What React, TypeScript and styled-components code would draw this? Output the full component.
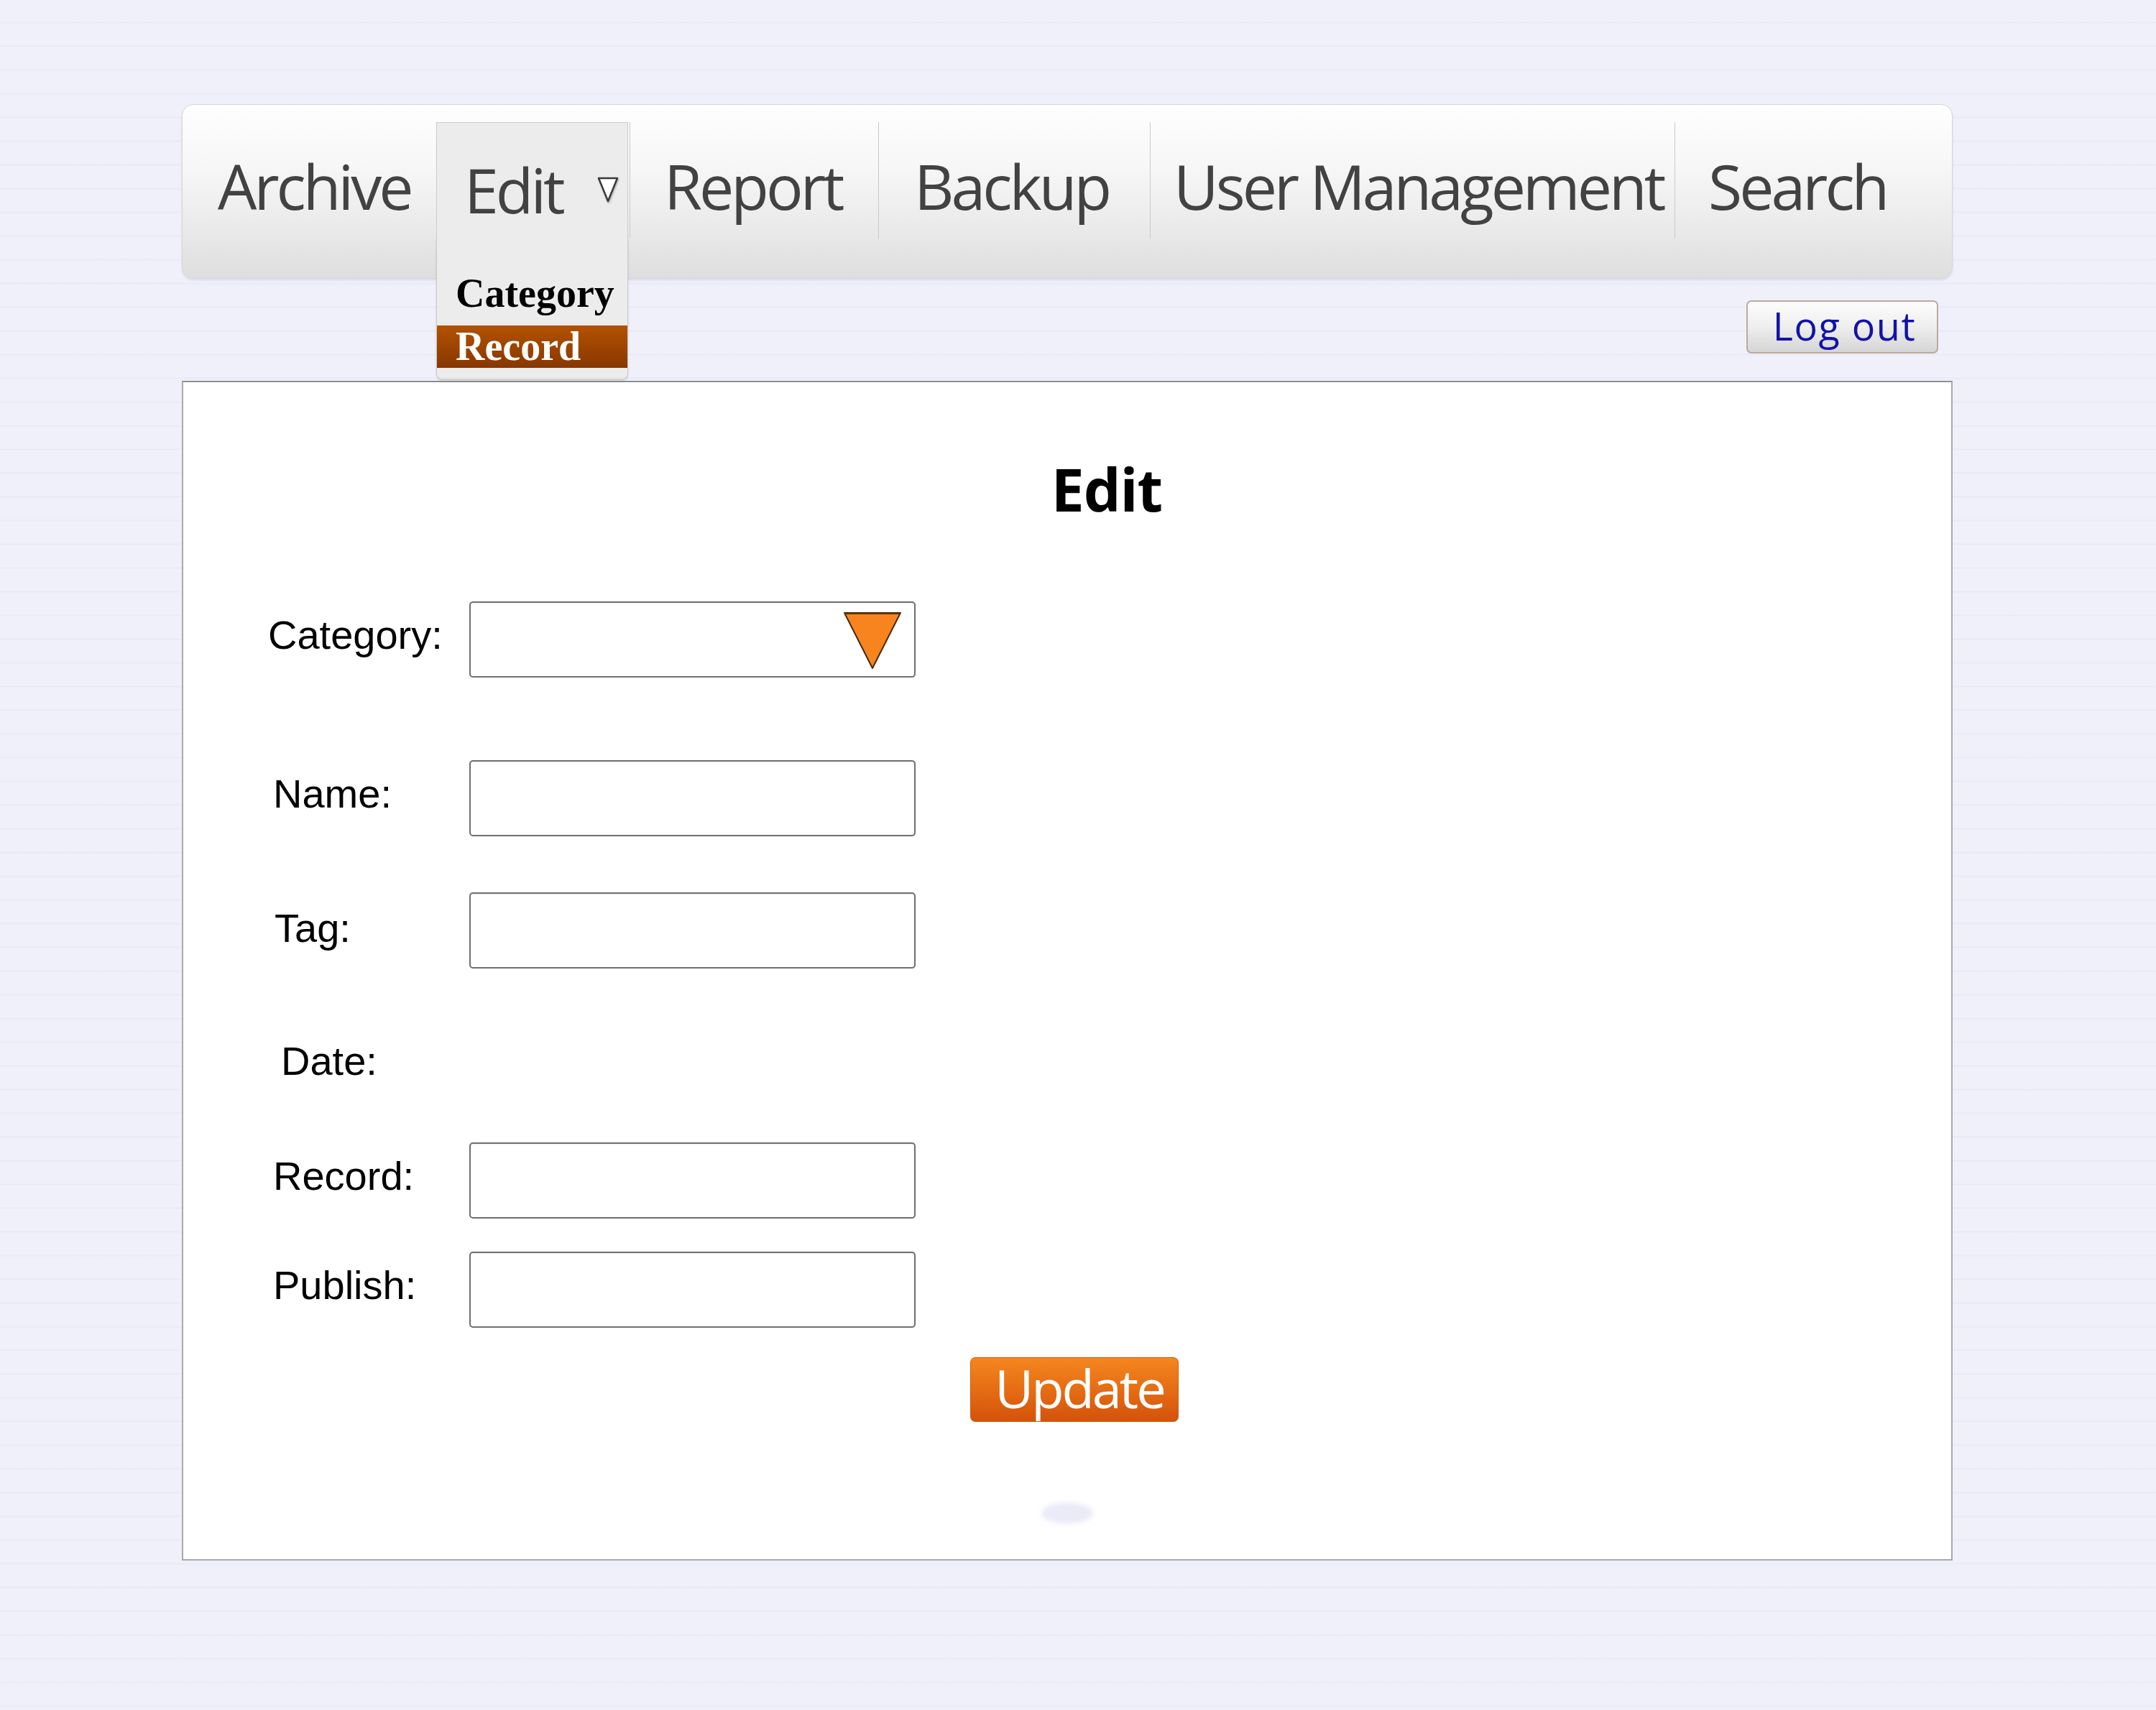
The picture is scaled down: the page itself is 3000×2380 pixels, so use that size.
import React from "react";
import styled, { createGlobalStyle } from "styled-components";

const GlobalStyle = createGlobalStyle`
  html, body { margin: 0; padding: 0; }
  body {
    background-color: #f0f0fb;
    background-image: repeating-linear-gradient(
      to bottom,
      rgba(255, 255, 255, 0) 0px,
      rgba(255, 255, 255, 0) 30px,
      rgba(218, 218, 238, 0.28) 31px,
      rgba(218, 218, 238, 0.28) 32px,
      rgba(255, 255, 255, 0) 33px
    );
    font-family: "Open Sans", "Liberation Sans", sans-serif;
  }
`;

const Page = styled.div`
  min-height: 2380px;
  box-sizing: border-box;
  padding: 145px 0 0 253px;
`;

const Frame = styled.div`
  width: 2464px;
`;

const NavBar = styled.nav`
  display: flex;
  height: 243px;
  box-sizing: border-box;
  padding: 24px 0 55px;
  border: 1px solid #d6d6d6;
  border-radius: 16px;
  background: linear-gradient(
    to bottom,
    #fefefe 0%,
    #f7f7f7 35%,
    #ebebeb 68%,
    #dedede 100%
  );
  box-shadow: 0 2px 3px rgba(120, 120, 150, 0.18);
`;

const NavItem = styled.div<{ $w?: number; $pl: number; $sep?: boolean; $open?: boolean }>`
  position: relative;
  box-sizing: border-box;
  ${(p) => (p.$w ? `width: ${p.$w}px; flex: none;` : `flex: 1;`)}
  height: 162px;
  display: flex;
  align-items: center;
  padding: ${(p) => (p.$open ? 24 : 14)}px 0 0 ${(p) => p.$pl}px;
  border-left: ${(p) => (p.$sep ? "1px solid #cacaca" : "none")};
  ${(p) =>
    p.$open
      ? `
    background: #ececec;
    border: 1px solid #cbcbcb;
    border-bottom: none;
    margin: 0 2px;
  `
      : ""}
  font-family: "Open Sans", "Liberation Sans", sans-serif;
  font-size: 86px;
  letter-spacing: -4px;
  color: #424242;
  white-space: nowrap;
`;

const NavArrow = styled.svg`
  margin-left: 48px;
  filter: drop-shadow(1px 2px 1px rgba(0, 0, 0, 0.25));
`;

const Dropdown = styled.div`
  position: absolute;
  top: 100%;
  left: -1px;
  right: -1px;
  box-sizing: border-box;
  padding: 47px 0 15px;
  background: #ececec;
  border: 1px solid #cbcbcb;
  border-top: none;
  border-radius: 0 0 8px 8px;
  box-shadow: 0 2px 3px rgba(0, 0, 0, 0.12);
  z-index: 5;
  letter-spacing: 0;
`;

const DropItem = styled.div<{ $active?: boolean }>`
  height: 59px;
  line-height: 59px;
  padding-left: 26px;
  font-family: "Liberation Serif", "Times New Roman", serif;
  font-weight: 700;
  font-size: 56px;
  color: ${(p) => (p.$active ? "#ffffff" : "#000000")};
  background: ${(p) =>
    p.$active ? "linear-gradient(to bottom, #b35200, #873700)" : "transparent"};
  & + & {
    margin-top: 15px;
  }
`;

const TopRow = styled.div`
  display: flex;
  justify-content: flex-end;
  padding: 30px 20px 38px 0;
`;

const LogoutButton = styled.button`
  width: 267px;
  height: 74px;
  box-sizing: border-box;
  border: 2px solid #bcaa9c;
  border-radius: 7px;
  background: linear-gradient(to bottom, #fdfdfd 0%, #eeeeee 50%, #d5d5d5 100%);
  display: flex;
  align-items: center;
  justify-content: center;
  padding: 0 0 4px 6px;
  font-family: "Open Sans", "Liberation Sans", sans-serif;
  font-size: 54px;
  letter-spacing: 1.5px;
  line-height: 1;
  color: #1212a8;
`;

const Panel = styled.main`
  box-sizing: border-box;
  height: 1642px;
  background: #ffffff;
  border: 2px solid #a9a9a9;
  border-top-color: #8e8e8e;
  padding-top: 92px;
`;

const Title = styled.h1`
  margin: 0;
  padding-left: 110px;
  text-align: center;
  font-family: "Open Sans", "Liberation Sans", sans-serif;
  font-weight: 700;
  font-size: 82px;
  letter-spacing: -1px;
  line-height: normal;
  color: #000;
`;

const Form = styled.form`
  margin: 101px 0 0;
`;

const Row = styled.div<{ $mt: number }>`
  display: grid;
  grid-template-columns: 398px 621px;
  height: 106px;
  margin-top: ${(p) => p.$mt}px;
`;

const Label = styled.label<{ $indent: number; $drop?: number }>`
  display: flex;
  align-items: center;
  padding: ${(p) => p.$drop ?? 0}px 0 14px ${(p) => p.$indent}px;
  font-family: "Liberation Sans", Arial, sans-serif;
  font-size: 56px;
  color: #000;
`;

const TextInput = styled.input`
  box-sizing: border-box;
  width: 100%;
  height: 106px;
  margin: 0;
  border: 2px solid #6f6f6f;
  border-radius: 5px;
  background: #fff;
  box-shadow: inset 0 1px 2px rgba(0, 0, 0, 0.08);
  outline: none;
`;

const SelectBox = styled.div`
  box-sizing: border-box;
  height: 106px;
  display: flex;
  justify-content: flex-end;
  align-items: flex-start;
  padding: 12px 17px 0 0;
  border: 2px solid #6f6f6f;
  border-radius: 5px;
  background: #fff;
  box-shadow: inset 0 1px 2px rgba(0, 0, 0, 0.08);
`;

const Actions = styled.div`
  display: flex;
  justify-content: center;
  padding-left: 20px;
  margin-top: 41px;
`;

const UpdateButton = styled.button`
  width: 290px;
  height: 90px;
  box-sizing: border-box;
  border: 1px solid #c9600f;
  border-radius: 7px;
  background: linear-gradient(to bottom, #f4861f 0%, #e56d14 50%, #d4520b 100%);
  padding: 0 0 4px 14px;
  display: flex;
  align-items: center;
  justify-content: center;
  font-family: "Open Sans", "Liberation Sans", sans-serif;
  font-size: 74px;
  letter-spacing: -3px;
  line-height: 1;
  color: #ffffff;
`;

const Glow = styled.div`
  width: 72px;
  height: 30px;
  margin: 112px auto 0;
  border-radius: 50%;
  background: #ebebf8;
  filter: blur(3px);
`;

type NavDef = { label: string; w?: number; pl: number; sep?: boolean; open?: boolean };

const navItems: NavDef[] = [
  { label: "Archive", w: 351, pl: 49 },
  { label: "Edit", w: 267, pl: 38, sep: true, open: true },
  { label: "Report", w: 346, pl: 47, sep: true },
  { label: "Backup", w: 378, pl: 49, sep: true },
  { label: "User Management", w: 730, pl: 32, sep: true },
  { label: "Search", pl: 46, sep: true },
];

const EditArrow = () => (
  <NavArrow width="30" height="36" viewBox="0 0 30 36">
    <polygon
      points="2,2 28,2 15,34"
      fill="#ffffff"
      stroke="#3a3a3a"
      strokeWidth="2.5"
      strokeLinejoin="round"
    />
  </NavArrow>
);

const OrangeTriangle = () => (
  <svg width="82" height="81" viewBox="0 0 82 81">
    <polygon
      points="2,2 80,2 41,79"
      fill="#f7841e"
      stroke="#4a2a08"
      strokeWidth="2"
      strokeLinejoin="round"
    />
    <line x1="2" y1="2.5" x2="80" y2="2.5" stroke="#5a3000" strokeWidth="3" />
  </svg>
);

export default function App() {
  return (
    <>
      <GlobalStyle />
      <Page>
        <Frame>
          <NavBar>
            {navItems.map((it) => (
              <NavItem key={it.label} $w={it.w} $pl={it.pl} $sep={it.sep} $open={it.open}>
                {it.label}
                {it.open && (
                  <>
                    <EditArrow />
                    <Dropdown>
                      <DropItem>Category</DropItem>
                      <DropItem $active>Record</DropItem>
                    </Dropdown>
                  </>
                )}
              </NavItem>
            ))}
          </NavBar>

          <TopRow>
            <LogoutButton type="button">Log out</LogoutButton>
          </TopRow>

          <Panel>
            <Title>Edit</Title>
            <Form onSubmit={(e) => e.preventDefault()}>
              <Row $mt={0}>
                <Label $indent={118}>Category:</Label>
                <SelectBox>
                  <OrangeTriangle />
                </SelectBox>
              </Row>
              <Row $mt={115}>
                <Label $indent={125}>Name:</Label>
                <TextInput type="text" />
              </Row>
              <Row $mt={78}>
                <Label $indent={127} $drop={6}>Tag:</Label>
                <TextInput type="text" />
              </Row>
              <Row $mt={82}>
                <Label $indent={136}>Date:</Label>
                <div />
              </Row>
              <Row $mt={54}>
                <Label $indent={125}>Record:</Label>
                <TextInput type="text" />
              </Row>
              <Row $mt={46}>
                <Label $indent={125}>Publish:</Label>
                <TextInput type="text" />
              </Row>
              <Actions>
                <UpdateButton type="submit">Update</UpdateButton>
              </Actions>
              <Glow />
            </Form>
          </Panel>
        </Frame>
      </Page>
    </>
  );
}
